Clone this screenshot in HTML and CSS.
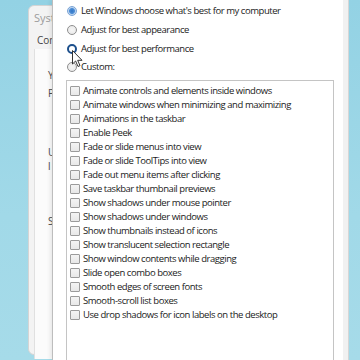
FILE: index.html
```html
<!DOCTYPE html>
<html lang="en">
<head>
    <meta charset="UTF-8">
    <title>Performance Options</title>
    <link rel="stylesheet" href="styles.css">
</head>
<body>
    <div class="desktop">
        <!-- Ventana de fondo: solo se ve el borde izquierdo -->
        <div class="back-window">
            <div class="back-title">Syste</div>
            <div class="back-tab">Com</div>
            <div class="back-panel">
                <p class="back-line first">Y</p>
                <p class="back-line">P</p>
                <p class="back-line gap-user">U</p>
                <p class="back-line thin">l</p>
                <p class="back-line gap-start">S</p>
            </div>
        </div>

        <!-- Dialogo principal -->
        <div class="dialog">
            <div class="options">
                <label class="radio-row"><span class="radio checked"></span>Let Windows choose what's best for my computer</label>
                <label class="radio-row"><span class="radio"></span>Adjust for best appearance</label>
                <label class="radio-row"><span class="radio focused"></span>Adjust for best performance</label>
                <label class="radio-row"><span class="radio"></span>Custom:</label>
            </div>

            <ul class="effects-list">
                <li><span class="check"></span>Animate controls and elements inside windows</li>
                <li><span class="check"></span>Animate windows when minimizing and maximizing</li>
                <li><span class="check"></span>Animations in the taskbar</li>
                <li><span class="check"></span>Enable Peek</li>
                <li><span class="check"></span>Fade or slide menus into view</li>
                <li><span class="check"></span>Fade or slide ToolTips into view</li>
                <li><span class="check"></span>Fade out menu items after clicking</li>
                <li><span class="check"></span>Save taskbar thumbnail previews</li>
                <li><span class="check"></span>Show shadows under mouse pointer</li>
                <li><span class="check"></span>Show shadows under windows</li>
                <li><span class="check"></span>Show thumbnails instead of icons</li>
                <li><span class="check"></span>Show translucent selection rectangle</li>
                <li><span class="check"></span>Show window contents while dragging</li>
                <li><span class="check"></span>Slide open combo boxes</li>
                <li><span class="check"></span>Smooth edges of screen fonts</li>
                <li><span class="check"></span>Smooth-scroll list boxes</li>
                <li><span class="check"></span>Use drop shadows for icon labels on the desktop</li>
            </ul>

            <!-- Puntero del raton -->
            <svg class="cursor" width="12" height="18" viewBox="0 0 12 18">
                <path d="M0.5 0.5 L0.5 14 L3.6 11 L6 16.5 L8 15.6 L5.7 10.3 L10 10.3 Z" fill="#fff" stroke="#333" stroke-width="1"/>
            </svg>
        </div>
    </div>
</body>
</html>
```

FILE: styles.css
```css
body {
    margin: 0;
    font-family: 'Open Sans', 'Noto Sans', sans-serif;
    color: #1a1a1a;
}

.desktop {
    position: relative;
    width: 360px;
    height: 360px;
    overflow: hidden;
    background: linear-gradient(180deg, #93d2e4 0%, #a1d9e8 60%, #a6dbe9 100%);
}

/* Ventana de fondo */
.back-window {
    position: absolute;
    left: 28px;
    top: 5px;
    width: 40px;
    height: 350px;
    box-sizing: border-box;
    background: #f3f3f3;
    border: 1px solid #d4d4d4;
    border-radius: 6px;
    padding: 5px 0 0 5px;
    font-size: 10px;
    white-space: nowrap;
}

.back-title {
    color: #9c9c9c;
    font-size: 11px;
    line-height: 14px;
}

.back-tab {
    margin: 9px 0 0 3px;
    color: #444;
    line-height: 12px;
}

.back-panel {
    margin-top: 3px;
    height: 290px;
    background: #fbfbfb;
    border-left: 1px solid #e0e0e0;
    padding: 20px 0 0 13px;
    color: #4a4a4a;
}

.back-line {
    margin: 0;
    line-height: 12px;
}

.back-line.first {
    margin-bottom: 6px;
}

.back-line.gap-user {
    margin-top: 47px;
}

.back-line.thin {
    margin-top: 2px;
}

.back-line.gap-start {
    margin-top: 43px;
}

/* Dialogo */
.dialog {
    position: absolute;
    left: 52px;
    top: 0;
    width: 296px;
    height: 360px;
    box-sizing: border-box;
    background: #fff;
    border-left: 1px solid #bdbdbd;
    border-right: 5px solid #f1f1f1;
    box-shadow: 1px 0 0 #d6d6d6, -2px 0 4px rgba(0,0,0,0.08);
    font-size: 9.5px;
    letter-spacing: -0.45px;
}

.options {
    padding: 2px 0 0 14px;
}

.radio-row {
    display: flex;
    align-items: center;
    gap: 4px;
    height: 18.7px;
    line-height: 12px;
    white-space: nowrap;
}

.radio {
    width: 10px;
    height: 10px;
    box-sizing: border-box;
    border-radius: 50%;
    border: 1px solid #8e8e8e;
    background: radial-gradient(circle, #f6f6f6 0%, #e6e6e6 100%);
    flex-shrink: 0;
}

.radio.checked {
    border-color: #7aa3d4;
    background: radial-gradient(circle, #2f74c6 0%, #4f8fd6 45%, #b9d2ef 60%, #e3eefa 100%);
}

.radio.focused {
    border: 2px solid #1c4f8c;
    background: #fff;
}

.effects-list {
    list-style: none;
    margin: 3px 0 0 13px;
    padding: 3px 0 0 3px;
    width: 268px;
    height: 290px;
    box-sizing: border-box;
    border: 1px solid #c4c4c4;
    border-bottom: none;
}

.effects-list li {
    display: flex;
    align-items: center;
    gap: 3px;
    height: 14px;
    line-height: 12px;
    white-space: nowrap;
}

.check {
    width: 10px;
    height: 10px;
    box-sizing: border-box;
    border: 1px solid #9b9b9b;
    border-radius: 1px;
    background: linear-gradient(180deg, #f4f4f4, #e8e8e8);
    flex-shrink: 0;
}

.cursor {
    position: absolute;
    left: 19px;
    top: 50px;
}
```
